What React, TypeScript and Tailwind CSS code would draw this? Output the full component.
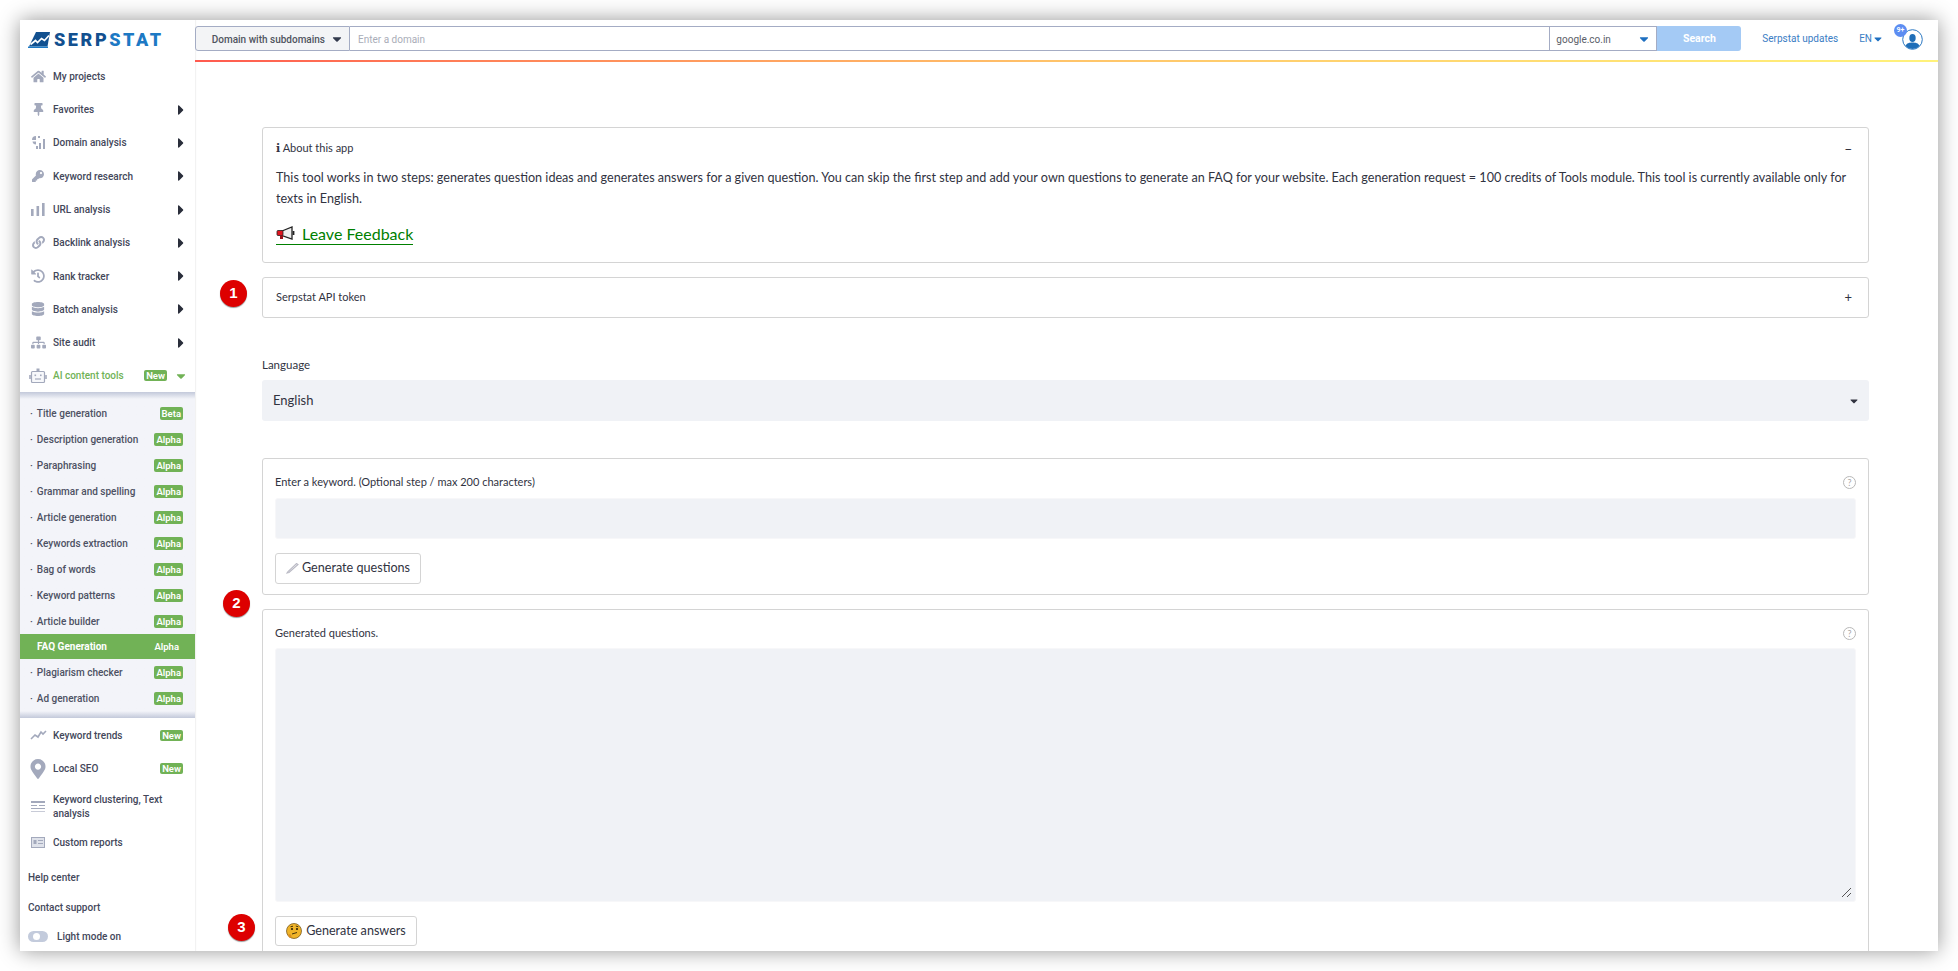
import { FaCaretDown, FaCaretRight, FaDatabase, FaHistory, FaHome, FaKey, FaLink, FaMapMarkerAlt, FaSitemap, FaThumbtack } from 'react-icons/fa';
import { ReactNode } from 'react';

const iconClass = 'text-[#a3a9bc]';

function DomainIcon() {
  return (
    <svg width="15" height="15" viewBox="0 0 15 15" fill="#a3a9bc">
      <path d="M5 1a4 4 0 0 0-4 4h4z" />
      <path d="M1.5 6.5h3.5v3a3.5 3.5 0 0 1-3.5-3z" />
      <rect x="7" y="1" width="2" height="2" />
      <rect x="8" y="8" width="2" height="6" />
      <rect x="12" y="4" width="2" height="10" />
      <rect x="5" y="11" width="2" height="3" />
    </svg>
  );
}

function BarsIcon() {
  return (
    <svg width="14" height="13" viewBox="0 0 14 13" fill="#a3a9bc">
      <rect x="0" y="6" width="2.6" height="7" />
      <rect x="5.5" y="3" width="2.6" height="10" />
      <rect x="11" y="0" width="2.6" height="13" />
    </svg>
  );
}

function RobotIcon() {
  return (
    <svg width="18" height="16" viewBox="0 0 18 16" fill="none" stroke="#a3a9bc" strokeWidth="1.2">
      <rect x="2.5" y="3.500" width="13" height="11" rx="1" fill="#f7f8fb" />
      <path d="M1 7v4M17 7v4" strokeWidth="1.600" />
      <rect x="7.500" y="0.500" width="3" height="3" fill="#a3a9bc" stroke="none" />
      <rect x="5.500" y="6.500" width="1.600" height="1.600" fill="#a3a9bc" stroke="none" />
      <rect x="11" y="6.500" width="1.600" height="1.600" fill="#a3a9bc" stroke="none" />
      <path d="M6 11h6" />
    </svg>
  );
}

function TrendIcon() {
  return (
    <svg width="17" height="10" viewBox="0 0 17 10" fill="none" stroke="#a3a9bc" strokeWidth="1.6">
      <path d="M1 9l4-4 3 2 3-5 2 2 3-3" />
    </svg>
  );
}

function ClusterIcon() {
  return (
    <svg width="14" height="12" viewBox="0 0 14 12" fill="#a3a9bc">
      <rect x="0" y="0" width="14" height="2" />
      <rect x="0" y="4" width="6" height="1" />
      <rect x="8" y="4" width="6" height="1" />
      <rect x="0" y="7" width="14" height="1" />
      <rect x="0" y="10" width="14" height="1" opacity="0.6" />
    </svg>
  );
}

function ReportIcon() {
  return (
    <svg width="14" height="11" viewBox="0 0 14 11">
      <rect x="0.5" y="0.5" width="13" height="10" fill="#dfe2ea" stroke="#a3a9bc" />
      <rect x="2.5" y="3" width="3" height="4" fill="#a3a9bc" />
      <path d="M7 3.5h5M7 6.5h5" stroke="#a3a9bc" />
    </svg>
  );
}

function Logo() {
  return (
    <svg width="22" height="16" viewBox="0 0 22 16">
      <path d="M8 0h14l-2.500 14.500H1z" fill="#12508f" />
      <path d="M0 14.500h20V16H0z" fill="#1d79c4" />
      <path d="M2.500 12.500l5-4 2 2 4-4 3 2 4.500-5" fill="none" stroke="#fff" strokeWidth="1.700" />
    </svg>
  );
}

function Megaphone() {
  return (
    <svg width="20" height="15" viewBox="0 0 20 15">
      <path d="M6 5l10-4v12L6 9.500z" fill="#efefef" stroke="#222" strokeWidth="1.300" />
      <rect x="1" y="4.500" width="6" height="5" rx="1" fill="#e0141f" stroke="#222" strokeWidth="0.800" />
      <rect x="4" y="9.500" width="3" height="3.500" fill="#9c0f18" />
      <path d="M17.500 5v4" stroke="#222" strokeWidth="1.800" />
    </svg>
  );
}

function ThinkingFace() {
  return (
    <svg width="16" height="16" viewBox="0 0 16 16">
      <circle cx="8" cy="8" r="7.500" fill="#f0b429" stroke="#6c4b10" strokeWidth="0.700" />
      <circle cx="6" cy="6" r="1.100" fill="#2f2208" />
      <circle cx="11" cy="6" r="1.100" fill="#2f2208" />
      <path d="M4.500 3.800l2.500-.6M9.800 3l2.500.8M6 11l5-1.500" stroke="#2f2208" strokeWidth="0.900" fill="none" />
      <path d="M1.500 12c2-1.500 3.500-.8 4 .7.300 1.300-1 2.300-2 2z" fill="#d98e1f" />
    </svg>
  );
}

function HelpIcon() {
  return (
    <span className="flex h-[13px] w-[13px] items-center justify-center rounded-full border border-[#b8b8b8] text-[9px] leading-none text-[#a8a8a8]">
      ?
    </span>
  );
}

function Badge({ label, active }: { label: string; active?: boolean }) {
  return (
    <span
      className={`rounded-[2px] px-[2px] text-[9.5px] leading-[13px] font-semibold text-white ${
        active ? '' : 'bg-[#71b256]'
      }`}
    >
      {label}
    </span>
  );
}

const mainItems: { label: string; icon: ReactNode }[] = [
  { label: 'Favorites', icon: <FaThumbtack size={13} className={iconClass} /> },
  { label: 'Domain analysis', icon: <DomainIcon /> },
  { label: 'Keyword research', icon: <FaKey size={12} className={iconClass} /> },
  { label: 'URL analysis', icon: <BarsIcon /> },
  { label: 'Backlink analysis', icon: <FaLink size={13} className={iconClass} /> },
  { label: 'Rank tracker', icon: <FaHistory size={14} className={iconClass} /> },
  { label: 'Batch analysis', icon: <FaDatabase size={14} className={iconClass} /> },
  { label: 'Site audit', icon: <FaSitemap size={15} className={iconClass} /> },
];

const subItems = [
  ['Title generation', 'Beta'],
  ['Description generation', 'Alpha'],
  ['Paraphrasing', 'Alpha'],
  ['Grammar and spelling', 'Alpha'],
  ['Article generation', 'Alpha'],
  ['Keywords extraction', 'Alpha'],
  ['Bag of words', 'Alpha'],
  ['Keyword patterns', 'Alpha'],
  ['Article builder', 'Alpha'],
  ['FAQ Generation', 'Alpha'],
  ['Plagiarism checker', 'Alpha'],
  ['Ad generation', 'Alpha'],
];

function Sidebar() {
  return (
    <aside className="flex w-[175px] shrink-0 flex-col font-['Roboto',sans-serif] text-[10px] font-medium text-[#43475a] shadow-[1px_0_1px_#f2f2f2]">
      <div className="flex h-[40px] shrink-0 items-center pl-[8px]">
        <Logo />
        <span className="ml-[4px] text-[18px] leading-none font-black tracking-[2.6px] text-[#12508f]">
          SERP<span className="text-[#1d79c4]">STAT</span>
        </span>
      </div>
      <div className="flex h-[33px] shrink-0 items-center pb-[1px]">
        <span className="flex w-[33px] justify-center pl-[3px]">
          <FaHome size={15} className={iconClass} />
        </span>
        <span>My projects</span>
      </div>
      {mainItems.map((item) => (
        <div key={item.label} className="flex h-[33.3px] shrink-0 items-center">
          <span className="flex w-[33px] justify-center pl-[3px]">{item.icon}</span>
          <span>{item.label}</span>
          <FaCaretRight size={16} className="mr-[6px] ml-auto text-[#2a2e3b]" />
        </div>
      ))}
      <div className="flex h-[33px] shrink-0 items-center text-[#71b256]">
        <span className="flex w-[33px] justify-center pl-[3px]">
          <RobotIcon />
        </span>
        <span>AI content tools</span>
        <span className="ml-auto">
          <Badge label="New" />
        </span>
        <FaCaretDown size={14} className="mr-[7px] ml-[7px] text-[#71b256]" />
      </div>
      <div className="shrink-0 bg-gradient-to-b from-[#c3c9da] from-0% via-[#f3f4f9] via-[7px] to-[#f3f4f9] pt-[8px]">
        {subItems.map(([label, tag]) =>
          label === 'FAQ Generation' ? (
            <div key={label} className="flex h-[25px] items-center justify-between bg-[#71b256] pr-[14px] pl-[17px] font-bold text-white">
              <span>{label}</span>
              <Badge label={tag} active />
            </div>
          ) : (
            <div key={label} className="flex h-[26px] items-center justify-between pr-[12px] pl-[10px] text-[#4d5163]">
              <span>
                <span className="mr-[4px]">·</span>
                {label}
              </span>
              <Badge label={tag} />
            </div>
          ),
        )}
        <div className="h-[7px] bg-gradient-to-b from-[#f3f4f9] to-[#c3c9da]" />
      </div>
      <div className="flex h-[34px] shrink-0 items-center">
        <span className="flex w-[33px] justify-center pl-[3px]">
          <TrendIcon />
        </span>
        <span>Keyword trends</span>
        <span className="mr-[12px] ml-auto">
          <Badge label="New" />
        </span>
      </div>
      <div className="flex h-[33px] shrink-0 items-center">
        <span className="flex w-[33px] justify-center pl-[3px]">
          <FaMapMarkerAlt size={20} className={iconClass} />
        </span>
        <span>Local SEO</span>
        <span className="mr-[12px] ml-auto">
          <Badge label="New" />
        </span>
      </div>
      <div className="flex h-[44px] shrink-0 items-center">
        <span className="flex w-[33px] justify-center pl-[3px]">
          <ClusterIcon />
        </span>
        <span className="w-[125px] leading-[14px]">Keyword clustering, Text analysis</span>
      </div>
      <div className="flex h-[27px] shrink-0 items-center">
        <span className="flex w-[33px] justify-center pl-[3px]">
          <ReportIcon />
        </span>
        <span>Custom reports</span>
      </div>
      <div className="mt-[14px] pl-[8px]">Help center</div>
      <div className="mt-[15px] pl-[8px]">Contact support</div>
      <div className="mt-[14px] flex items-center pl-[8px]">
        <span className="flex h-[11px] w-[20px] items-center rounded-full bg-[#c3cbdc] pl-[5px]">
          <span className="h-[7px] w-[7px] rounded-full bg-white" />
        </span>
        <span className="ml-[9px] text-[10px]">Light mode on</span>
      </div>
    </aside>
  );
}

function TopBar() {
  return (
    <header className="flex h-[40px] shrink-0 items-start pt-[6px] pr-[15px] font-['Roboto',sans-serif] text-[10px]">
      <div className="flex h-[25px] w-[155px] items-center justify-end rounded-l-[3px] border border-[#a4acc4] bg-[#f3f4f6] pt-[1px] pr-[5px] font-medium text-[#50545f]">
        <span>Domain with subdomains</span>
        <FaCaretDown size={14} className="ml-[5px] text-[#333a4d]" />
      </div>
      <div className="flex h-[25px] flex-1 items-center border-y border-[#a4acc4] pt-[1px] pl-[8px] text-[#a9adb8]">Enter a domain</div>
      <div className="flex h-[25px] w-[108px] items-center justify-between border border-[#a4acc4] pt-[1px] pr-[5px] pl-[6px] text-[#5a5e68]">
        <span>google.co.in</span>
        <FaCaretDown size={14} className="text-[#1e6fc0]" />
      </div>
      <div className="flex h-[25px] w-[84px] items-center justify-center rounded-r-[3px] bg-[#a4caf5] pt-[1px] text-[10.5px] font-bold text-white">Search</div>
      <span className="mt-[5px] ml-[21px] text-[#3b7dc4]">Serpstat updates</span>
      <span className="mt-[5px] ml-[21px] flex items-center text-[#3b7dc4]">
        EN
        <FaCaretDown size={12} className="text-[#1e6fc0]" />
      </span>
      <div className="relative mt-[-1px] ml-[14px]">
        <svg width="21" height="21" viewBox="0 0 21 21" className="mt-[4px] ml-[4px]">
          <circle cx="10.500" cy="10.500" r="9.800" fill="#fff" stroke="#2b78c2" />
          <ellipse cx="10.500" cy="9" rx="3.200" ry="4" fill="#1f6eb8" />
          <path d="M3.500 17c1-3 4-3.500 7-3.500s6 .5 7 3.500a9.800 9.800 0 0 1-14 0z" fill="#1f6eb8" />
        </svg>
        <span className="absolute top-[-1px] left-[-4px] flex h-[13px] w-[13px] items-center justify-center rounded-full bg-[#5c8df2] text-[7px] font-bold text-white">
          9+
        </span>
      </div>
    </header>
  );
}

function Card({ className, children }: { className: string; children: ReactNode }) {
  return <div className={`rounded-[3px] border border-[#d4d4d4] ${className}`}>{children}</div>;
}

function Content() {
  return (
    <main className="relative mt-[65px] flex-1 pr-[69px] pl-[67px] font-['Lato',sans-serif] text-[#31333f]">
      <Card className="h-[136px] px-[13px] pt-[11px]">
        <div className="flex items-center justify-between pr-[3px] text-[11px] leading-[18px]">
          <span>
            <b className="font-['DejaVu_Serif',serif]">i</b> About this app
          </span>
          <span className="text-[13px]">−</span>
        </div>
        <p className="mt-[9px] text-[12.6px] leading-[21px]">
          This tool works in two steps: generates question ideas and generates answers for a given question. You can skip the first step and add your own questions to generate an FAQ for your website. Each generation request = 100 credits of Tools module. This tool is currently available only for texts in English.
        </p>
        <a className="mt-[14px] inline-flex items-center border-b border-[#008000] text-[16px] leading-[21px] text-[#008000]">
          <Megaphone />
          <span className="ml-[6px]">Leave Feedback</span>
        </a>
      </Card>
      <Card className="mt-[14px] flex h-[41px] items-center justify-between pr-[16px] pl-[13px] text-[11px]">
        <span>Serpstat API token</span>
        <span className="text-[13px]">+</span>
      </Card>
      <div className="mt-[39px] text-[11.5px] leading-[16px]">Language</div>
      <div className="mt-[7px] flex h-[41px] items-center justify-between rounded-[3px] bg-[#f0f2f6] pt-[1px] pr-[9px] pl-[11px] text-[13px]">
        <span>English</span>
        <FaCaretDown size={12} />
      </div>
      <Card className="mt-[37px] h-[137px] px-[12px] pt-[15px]">
        <div className="flex items-center justify-between text-[11px] leading-[16px]">
          <span>Enter a keyword. (Optional step / max 200 characters)</span>
          <HelpIcon />
        </div>
        <div className="mt-[8px] h-[41px] rounded-[3px] border border-[#f7f7f9] bg-[#f0f2f6]" />
        <div className="mt-[14px] flex h-[31px] w-[146px] items-center justify-center rounded-[3px] border border-[#d4d4d4] text-[12.6px]">
          <svg width="13" height="11" viewBox="0 0 13 11" className="mr-[3px]" fill="none" stroke="#b9b9c4" strokeWidth="1.100">
            <path d="M1 10l2-.5 9-8-1.500-1-8.500 8z" />
          </svg>
          Generate questions
        </div>
      </Card>
      <Card className="mt-[14px] h-[400px] px-[12px] pt-[15px]">
        <div className="flex items-center justify-between text-[11px] leading-[16px]">
          <span>Generated questions.</span>
          <HelpIcon />
        </div>
        <div className="relative mt-[7px] h-[254px] rounded-[3px] border border-[#f7f7f9] bg-[#f0f2f6]">
          <svg width="11" height="11" viewBox="0 0 11 11" className="absolute right-[3px] bottom-[3px]" stroke="#555" fill="none">
            <path d="M1 10L10 1M6 10l4-4" />
          </svg>
        </div>
        <div className="mt-[14px] flex h-[30px] w-[142px] items-center justify-center rounded-[3px] border border-[#d4d4d4] text-[12.6px]">
          <span className="mr-[4px]">
            <ThinkingFace />
          </span>
          Generate answers
        </div>
      </Card>
      <Step n="1" className="top-[153px] left-[25px]" />
      <Step n="2" className="top-[463px] left-[28px]" />
      <Step n="3" className="top-[787px] left-[33px]" />
    </main>
  );
}

function Step({ n, className }: { n: string; className: string }) {
  return (
    <span
      className={`absolute flex h-[27px] w-[27px] items-center justify-center rounded-full bg-[#dd0000] font-['Liberation_Sans',sans-serif] text-[15px] font-bold text-white shadow-[0_1px_1px_rgba(0,0,0,0.4)] ${className}`}
    >
      {n}
    </span>
  );
}

export default function App() {
  return (
    <div className="h-[971px] overflow-hidden bg-white p-[20px]">
      <div className="flex h-[931px] overflow-hidden bg-white shadow-[0_0_20px_rgba(0,0,0,0.42)]">
        <Sidebar />
        <div className="flex min-w-0 flex-1 flex-col">
          <div className="shrink-0">
            <TopBar />
            <div className="h-[2px] bg-gradient-to-r from-[#ff5a4f] via-[#ffc46a] to-[#fff27a]" />
          </div>
          <Content />
        </div>
      </div>
    </div>
  );
}
